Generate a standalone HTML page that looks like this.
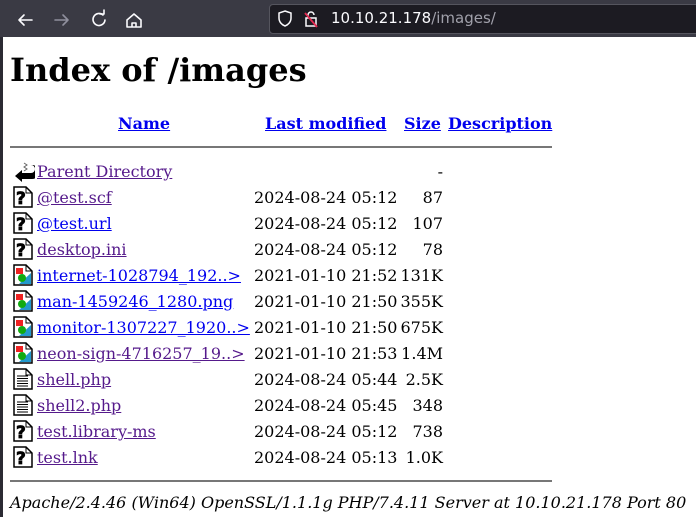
<!DOCTYPE html>
<html><head><meta charset="utf-8"><style>
*{margin:0;padding:0}
body{width:696px;height:517px;overflow:hidden;background:#fff;font-family:"DejaVu Serif","Liberation Serif",serif;position:relative}
.bar{position:absolute;left:0;top:0;width:696px;height:37px;background:#3a3a44}
.url{position:absolute;left:269px;top:4px;width:440px;height:30px;background:#1c1b22;border-radius:4px;border:1px solid #55555e;box-sizing:border-box}
.edge{position:absolute;left:0;top:37px;width:3px;height:480px;background:#2b2a33}
.t{position:absolute;white-space:nowrap;font-size:16px;line-height:20px}
a{text-decoration:underline}
.b{color:#0000ee}.p{color:#551a8b}
.hd{font-weight:bold;color:#0000ee}
.d{color:#000}
.s{color:#000;text-align:right;width:60px}
.hr{position:absolute;left:10px;width:542px;height:2px;background:#777}
svg.i{position:absolute;left:13px}
</style></head><body>
<div class="bar">
<svg width="260" height="37" style="position:absolute;left:0;top:0" fill="none" stroke-width="1.6" stroke-linecap="round" stroke-linejoin="round">
<path d="M19 20h13M19 20l5-5M19 20l5 5" stroke="#fbfbfe"/>
<path d="M55 20h13M68 20l-5-5M68 20l-5 5" stroke="#8f8f9d"/>
<path d="M103 15a6 6 0 1 0 2 5" stroke="#fbfbfe"/><path d="M100 14h4v-4" stroke="#fbfbfe"/>
<path d="M127 20l7-6 7 6v7h-14z M132 27v-4h4v4" stroke="#fbfbfe"/>
</svg>
<div class="url">
<svg width="60" height="28" style="position:absolute;left:0;top:0" fill="none" stroke-width="1.5">
<path d="M15 6l6 2v5c0 4-3 7-6 8-3-1-6-4-6-8V8z" stroke="#fbfbfe"/>
<rect x="36" y="13" width="10" height="8" stroke="#fbfbfe"/><path d="M38 13v-3a3 3 0 0 1 6 0" stroke="#fbfbfe"/>
<path d="M35 8l12 14" stroke="#e22850" stroke-width="1.8"/>
</svg>
<div style="position:absolute;left:61px;top:4px;font-family:'DejaVu Sans','Liberation Sans',sans-serif;font-size:15px;color:#fbfbfe">10.10.21.178<span style="color:#a0a0aa">/images/</span></div>
</div>
</div>
<div class="edge"></div>
<div class="t" style="left:10px;top:51px;font-size:32px;line-height:38px;font-weight:bold">Index of /images</div>
<a class="t hd" style="left:118px;top:114px">Name</a>
<a class="t hd" style="left:265px;top:114px">Last modified</a>
<a class="t hd" style="left:404px;top:114px">Size</a>
<a class="t hd" style="left:448px;top:114px">Description</a>
<div class="hr" style="top:146px"></div>
<div class="hr" style="top:480px"></div>

<svg class="i" style="top:160px" width="22" height="24"><path d="M13 5h5a4 4 0 0 1 0 8h-9v-3l-7 6 7 6v-3h10a7 7 0 0 0 0-14h-6z" fill="#000"/><path d="M11 3l3 2-3 2 3 2-3 2" stroke="#666" fill="none"/></svg>
<a class="t p" style="left:37px;top:162px">Parent Directory</a><div class="t s" style="left:383px;top:162px">-</div>

<div id="rows"></div>
<script>
var R=[["@test.scf","p","2024-08-24 05:12","87","u"],["@test.url","b","2024-08-24 05:12","107","u"],["desktop.ini","p","2024-08-24 05:12","78","u"],["internet-1028794_192..>","b","2021-01-10 21:52","131K","img"],["man-1459246_1280.png","b","2021-01-10 21:50","355K","img"],["monitor-1307227_1920..>","b","2021-01-10 21:50","675K","img"],["neon-sign-4716257_19..>","p","2021-01-10 21:53","1.4M","img"],["shell.php","p","2024-08-24 05:44","2.5K","txt"],["shell2.php","p","2024-08-24 05:45","348","txt"],["test.library-ms","p","2024-08-24 05:12","738","u"],["test.lnk","p","2024-08-24 05:13","1.0K","u"]];
var h="";
R.forEach(function(r,i){var y=188+i*26;var ic;
var base='<path d="M1 1h12l6 6v14H1z" fill="#fff" stroke="#000" stroke-width="1.5"/><path d="M13 1v6h6" fill="none" stroke="#000"/>';
if(r[4]=="u")ic=base+'<text x="3" y="18" font-family="DejaVu Sans" font-weight="900" font-size="17" fill="#000" stroke="#000" stroke-width="0.8">?</text>';
else if(r[4]=="img")ic=base+'<path d="M3 4h7v6H3z" fill="#e22"/><path d="M6 20L18 9v11z" fill="#29c"/><circle cx="9" cy="14" r="4" fill="#1a1"/>';
else ic=base+'<path d="M4 8h11M4 10.5h11M4 13h11M4 15.5h11M4 18h11" stroke="#000"/>';
h+='<svg class="i" style="top:'+(y-2)+'px" width="22" height="23">'+ic+'</svg>';
h+='<a class="t '+r[1]+'" style="left:37px;top:'+y+'px">'+r[0].replace(/</g,"&lt;").replace(/>/g,"&gt;")+'</a>';
h+='<div class="t d" style="left:254px;top:'+y+'px">'+r[2]+'</div>';
h+='<div class="t s" style="left:383px;top:'+y+'px">'+r[3]+'</div>';});
document.getElementById("rows").innerHTML=h;
</script>
<div class="t" style="left:10px;top:493px;font-style:italic">Apache/2.4.46 (Win64) OpenSSL/1.1.1g PHP/7.4.11 Server at 10.10.21.178 Port 80</div>
</body></html>
